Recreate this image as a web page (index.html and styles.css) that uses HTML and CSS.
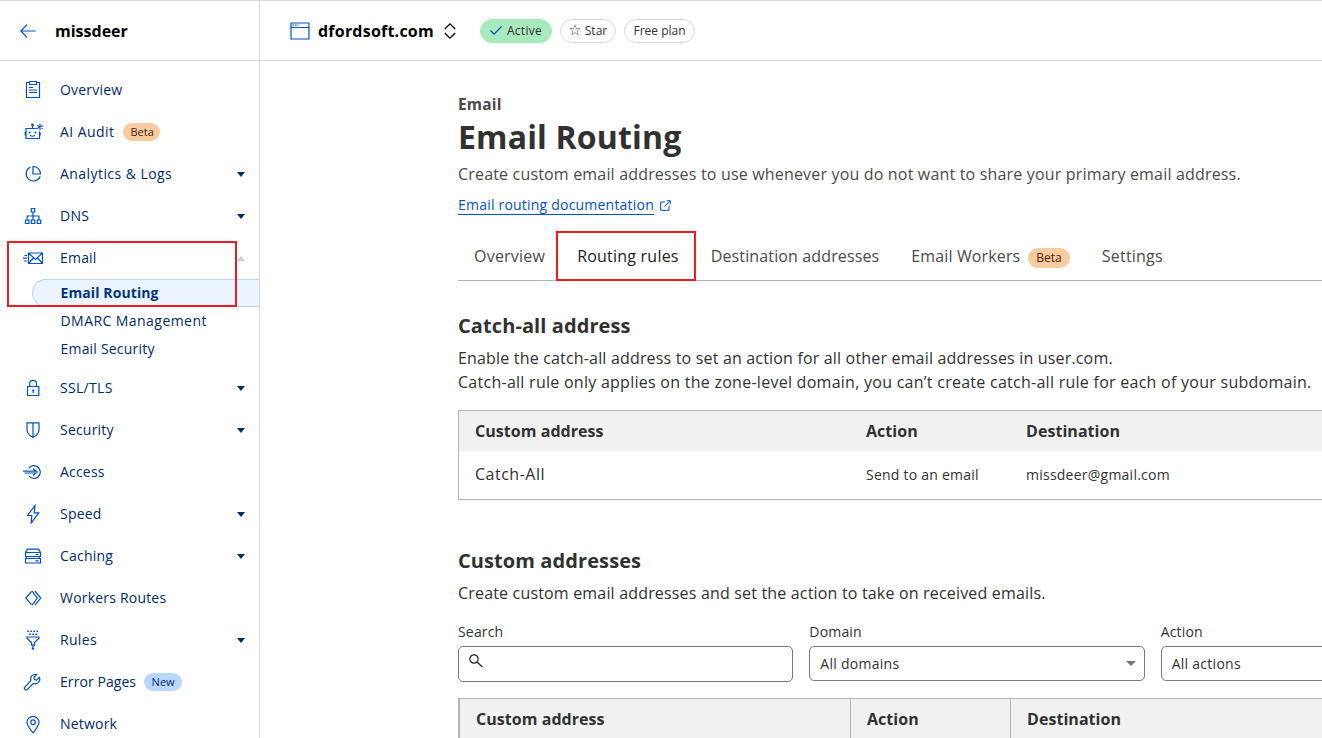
FILE: index.html
```html
<!DOCTYPE html>
<html lang="en">
<head>
<meta charset="utf-8">
<title>Email Routing</title>
<link rel="stylesheet" href="styles.css">
</head>
<body>
<div class="app">
  <aside class="sidebar">
    <div class="account">
      <svg class="back" width="16" height="14" viewBox="0 0 16 14"><path d="M7 .7.9 7 7 13.300M1 7h14.700"/></svg>
      <span class="account-name">missdeer</span>
    </div>
    <nav class="nav">
      <a class="item"><svg class="icon" viewBox="0 0 20 20"><path d="M6.500 2.500h-3v15h13v-15h-3M6.500 1.500h7v3h-7zM6 7.500h4M6 10h8M6 12.500h8"/></svg><span>Overview</span></a>
      <a class="item"><svg class="icon" viewBox="0 0 20 20"><path d="M14 6.500H3v10h13.500V9.500M9.500 6.500V3.500M2.200 10v3.500M17.200 10.500v3M7 13.200c1.200 1.400 3.600 1.400 4.800 0M17 2v6M14.300 3.500l5.400 3M19.700 3.500l-5.400 3"/><g class="solid"><circle cx="9.500" cy="3" r="1.400"/><circle cx="6.600" cy="10.500" r="1"/><circle cx="12.400" cy="10.500" r="1"/></g></svg><span class="wide">AI Audit</span><b class="badge beta first">Beta</b></a>
      <a class="item"><svg class="icon" viewBox="0 0 20 20"><path d="M7.500 3a7.300 7.300 0 1 0 9.700 9.500M10 2.500V10h7.500A7.500 7.500 0 0 0 10 2.500z"/></svg><span class="wide">Analytics &amp; Logs</span><i class="caret"></i></a>
      <a class="item"><svg class="icon" viewBox="0 0 20 20"><path d="M8.300 2.500h3.400v3.500H8.300zM2.500 14h3.500v3.500H2.500zM8.300 14h3.500v3.500H8.300zM14.200 14h3.500v3.500h-3.500zM10 6v8M4.200 14v-4h11.700v4"/></svg><span class="mid">DNS</span><i class="caret"></i></a>
      <a class="item"><svg class="icon" viewBox="0 0 20 20"><path d="M5.500 5h14v10.500h-14zM5.500 5l7 6.500 7-6.500M5.500 15.500l5-5.500M19.500 15.500l-5-5.500M1.500 7.500H4M0 10.200h4M1 13h3"/></svg><span>Email</span><i class="caret up"></i></a>
      <div class="submenu">
        <a class="sub current"><span>Email Routing</span></a>
        <a class="sub"><span class="wide">DMARC Management</span></a>
        <a class="sub"><span>Email Security</span></a>
      </div>
      <a class="item"><svg class="icon" viewBox="0 0 20 20"><path d="M4.500 8.500h11.300v9H4.500zM6.700 8.500V5.700a3.400 3.400 0 0 1 6.800 0v2.800M10.200 12v3"/><circle class="solid" cx="10.200" cy="12.300" r="1"/></svg><span class="mid">SSL/TLS</span><i class="caret"></i></a>
      <a class="item"><svg class="icon" viewBox="0 0 20 20"><path d="M4 2.800h12v6.700c0 4-3 6.500-6 8-3-1.500-6-4-6-8zM10 3v14.500"/></svg><span>Security</span><i class="caret"></i></a>
      <a class="item"><svg class="icon" viewBox="0 0 20 20"><path d="M6 6a6.400 6.400 0 1 1 0 8.200M0 9.200h13.500M1.500 11h12M10 6.700l4 3.400-4 3.400"/></svg><span>Access</span></a>
      <a class="item"><svg class="icon" viewBox="0 0 20 20"><path d="M12 1.500 4.500 11.500h4.300L8.200 19l7.500-10.200h-4.500z"/></svg><span>Speed</span><i class="caret"></i></a>
      <a class="item"><svg class="icon" viewBox="0 0 20 20"><path d="M4.500 3.200h11l2 3.300v4h-15v-4zM2.500 6.500h15M2.500 12.500h15v4.500h-15zM3.500 10.500v2M16.500 10.500v2M12.500 8.500h3M12.500 14.800h3"/></svg><span>Caching</span><i class="caret"></i></a>
      <a class="item"><svg class="icon" viewBox="0 0 20 20"><path d="M8.500 3.500 2.800 10.100 8.500 16.700M9 3l5.300 7.100L9 17.200M12 3l5.700 7.100-5.700 7.100"/></svg><span>Workers Routes</span></a>
      <a class="item"><svg class="icon" viewBox="0 0 20 20"><path d="M4 7h12v1.200l-4.500 4.300v2.700h-3v-2.700L4 8.200zM10 15.500v2"/><circle class="solid" cx="10" cy="18.500" r="1.200"/><path class="rain" d="M4.200 1.300h12M6.200 4.300h8.500"/></svg><span class="mid">Rules</span><i class="caret"></i></a>
      <a class="item"><svg class="icon" viewBox="0 0 20 20"><path d="M13.600 2.600a4.800 4.800 0 0 0-5.800 6.300L1.900 14.800a1.700 1.700 0 0 0 2.500 2.500l6-5.800a4.800 4.800 0 0 0 6.100-6.100L13.500 8 11.300 7.600 11 5.300z"/></svg><span class="snug">Error Pages</span><b class="badge new">New</b></a>
      <a class="item"><svg class="icon" viewBox="0 0 20 20"><path d="M10 18.800C7 15 4 12 4 8.300a6 6 0 0 1 12 0C16 12 13 15 10 18.800z"/><circle cx="10" cy="8.200" r="2.300"/></svg><span>Network</span></a>
    </nav>
    <div class="mark mark-nav"></div>
  </aside>
  <div class="page">
    <header class="topbar">
      <svg class="site" width="20" height="18" viewBox="0 0 20 18"><path d="M1 1h18v16H1zM1 5.500h18"/><path class="dots" d="M2.500 3.200h6"/></svg>
      <span class="domain">dfordsoft.com</span>
      <svg class="updown" width="12" height="16" viewBox="0 0 12 16"><path d="M.8 6 6 .9 11.200 6M.8 10 6 15.100 11.200 10"/></svg>
      <span class="chip active"><svg width="12" height="9" viewBox="0 0 12 9"><path d="M.5 4.500 4 8.200 11.500.5"/></svg><span>Active</span></span>
      <span class="chip star"><svg width="12" height="12" viewBox="0 0 12 12"><path d="M6 .8 7.300 4.500h3.900L8.100 6.900l1.100 4L6 8.600 2.800 10.900l1.100-4L.8 4.500h3.900z"/></svg><span>Star</span></span>
      <span class="chip plan"><span>Free plan</span></span>
    </header>
    <main class="content">
      <div class="crumb">Email</div>
      <h1>Email Routing</h1>
      <p class="lead">Create custom email addresses to use whenever you do not want to share your primary email address.</p>
      <a class="doc"><span>Email routing documentation</span><svg width="11" height="11" viewBox="0 0 11 11"><path d="M5 2H.7v8.300H9V6M6.500.7h3.800v3.800M10 1 4.500 6.500"/></svg></a>
      <div class="tabs">
        <a class="tab">Overview</a>
        <a class="tab selected">Routing rules<i class="mark"></i></a>
        <a class="tab tight">Destination addresses</a>
        <a class="tab tight">Email Workers<b class="badge beta large">Beta</b></a>
        <a class="tab">Settings</a>
      </div>
      <section class="catch-all">
        <h2>Catch-all address</h2>
        <p class="text">Enable the catch-all address to set an action for all other email addresses in user.com.</p>
        <p class="text note">Catch-all rule only applies on the zone-level domain, you can’t create catch-all rule for each of your subdomain.</p>
        <div class="table">
          <div class="row head"><span>Custom address</span><span>Action</span><span>Destination</span></div>
          <div class="row"><span class="big">Catch-All</span><span>Send to an email</span><span>missdeer@gmail.com</span></div>
        </div>
      </section>
      <section class="custom">
        <h2>Custom addresses</h2>
        <p class="text">Create custom email addresses and set the action to take on received emails.</p>
        <div class="filters">
          <div class="field"><label>Search</label><div class="box search"><svg width="14" height="14" viewBox="0 0 14 14"><circle cx="5" cy="5" r="4.200"/><path d="M8 8l5.500 5"/></svg></div></div>
          <div class="field"><label>Domain</label><div class="box"><span>All domains</span><i class="arrow"></i></div></div>
          <div class="field"><label>Action</label><div class="box"><span>All actions</span><i class="arrow"></i></div></div>
        </div>
        <div class="table ruled">
          <div class="row head"><span>Custom address</span><span>Action</span><span>Destination</span></div>
        </div>
      </section>
    </main>
  </div>
</div>
</body>
</html>
```

FILE: styles.css
```css
* { box-sizing: border-box; }
body { margin: 0; background: #fff; color: #313131; font-family: "Open Sans", "Noto Sans", sans-serif; font-size: 14px; }
h1, h2, p { margin: 0; }
svg { fill: none; stroke: #0051c3; stroke-width: 1.200; flex: none; }
.app { display: flex; width: 1322px; height: 738px; overflow: hidden; border-top: 1px solid #d9d9d9; }

/* Sidebar */
.sidebar { position: relative; width: 260px; flex: none; border-right: 1px solid #d9d9d9; }
.account { display: flex; align-items: center; height: 60px; padding-left: 20px; gap: 19px; border-bottom: 1px solid #d9d9d9; color: #000; font-size: 16px; font-weight: 700; }
.nav { padding-top: 8px; color: #002b6b; letter-spacing: .2px; }
.item { display: flex; align-items: center; height: 42px; padding: 0 14px 0 23px; }
.item > span { margin-left: 17px; padding-bottom: 2px; }
.nav .wide { letter-spacing: .44px; }
.nav .mid { letter-spacing: .32px; }
.nav .snug { letter-spacing: .07px; }
.icon { width: 20px; height: 20px; }
.solid { fill: #0051c3; stroke: none; }
.dots { stroke-dasharray: 1.500 1; }
.rain { stroke-dasharray: 1.600 1.500; stroke-width: 1.600; }
.caret { margin-left: auto; border: 4px solid transparent; border-top: 5px solid #002b6b; border-bottom: 0; }
.caret.up { border-top: 0; border-bottom: 5px solid #c5cfe0; }
.badge { height: 18px; margin-left: 8px; padding: 0 7px; border-radius: 9px; font-size: 11px; font-weight: 400; line-height: 18px; letter-spacing: 0; }
.first { margin-left: 9px; padding-right: 6.5px; }
.beta { background: #f9cba3; color: #4a1d00; }
.new { padding: 0 7.5px; background: #b9d6ff; color: #002b6b; }
.submenu { padding-bottom: 4px; }
.sub { display: flex; align-items: center; height: 28px; padding: 0 0 2px 60.500px; }
.sub.current { margin-left: 32px; padding-left: 27.500px; padding-bottom: 1px; border: 1px solid #b9d6ff; border-right: 0; border-radius: 14px 0 0 14px; background: #ebf4ff; color: #003681; font-weight: 700; letter-spacing: .1px; }

/* Highlight frames */
.mark { position: absolute; border: 2px solid #ed1c24; }
.mark-nav { left: 7px; top: 240px; width: 230px; height: 66px; }

/* Top bar */
.page { flex: 1; min-width: 0; overflow: hidden; }
.topbar { display: flex; align-items: center; height: 60px; padding-left: 30px; border-bottom: 1px solid #d9d9d9; }
.domain { width: 134px; padding-left: 8px; color: #000; font-size: 16px; font-weight: 700; letter-spacing: .22px; }
.updown { stroke: #000; stroke-width: 1.300; }
.chip { display: flex; align-items: center; justify-content: center; height: 24px; margin-left: 8px; padding-bottom: 1px; border: 1px solid #d9d9d9; border-radius: 12px; font-size: 12px; gap: 5px; }
.active { width: 72px; margin-left: 24px; border-color: #a9e9be; background: #a9e9be; letter-spacing: .3px; }
.star { width: 56px; gap: 4px; }
.star svg { stroke: #999; stroke-width: 1; }
.plan { width: 71px; }

/* Page content */
.content { width: 1236px; padding: 32px 0 0 198px; letter-spacing: .175px; }
.crumb { height: 22px; line-height: 23px; font-size: 15.500px; font-weight: 700; color: #4a4a4a; }
h1 { height: 44px; line-height: 44px; font-size: 32px; letter-spacing: .17px; }
.lead { height: 30px; line-height: 30px; font-size: 16px; color: #4a4a4a; }
.doc { display: flex; align-items: center; gap: 6px; height: 22px; margin-top: 5px; color: #0051c3; letter-spacing: .21px; }
.doc span { height: 20px; line-height: 20px; border-bottom: 1px solid #0051c3; }
.doc svg { stroke-width: 1; }
.tabs { display: flex; height: 49px; margin-top: 16px; border-bottom: 1px solid #b3b3b3; font-size: 16px; color: #4a4a4a; letter-spacing: .22px; }
.tab { display: flex; align-items: center; position: relative; padding: 0 16px; }
.tight { letter-spacing: .13px; }
.selected { color: #222; }
.tab .mark { left: -5.400px; top: -1px; width: 140px; height: 50px; }
.large { height: 20px; margin-top: 4px; line-height: 20px; border-radius: 10px; padding: 0 8px; font-size: 12px; }
h2 { height: 30px; margin-bottom: 5px; line-height: 30px; font-size: 20px; letter-spacing: .09px; }
.catch-all { padding-top: 30px; }
.text { height: 24px; line-height: 24px; font-size: 16px; }
.note { letter-spacing: .265px; }

/* Tables */
.table { margin-top: 16px; border: 1px solid #b3b3b3; }
.row { display: grid; grid-template-columns: 391px 160px 1fr; align-items: center; height: 48px; padding-bottom: 1px; letter-spacing: .24px; }
.row span { padding-left: 16px; }
.head { height: 40px; padding: 0; background: #f1f1f1; font-size: 16px; font-weight: 700; letter-spacing: .05px; }
.row .big { padding-bottom: 2px; font-size: 16px; letter-spacing: .5px; }
.ruled { border-left-width: 2px; }
.ruled span { height: 100%; border-right: 1px solid #b3b3b3; line-height: 40px; }

/* Filters */
.custom { padding-top: 46px; }
.filters { display: grid; grid-template-columns: repeat(3, 1fr); gap: 16px; margin-top: 16px; }
.field label { display: block; height: 25px; line-height: 22px; }
.box { display: flex; align-items: center; justify-content: space-between; height: 35px; padding: 0 8px 1px 10px; border: 1px solid #797979; border-radius: 5px; letter-spacing: .27px; }
.search { height: 36px; padding-bottom: 6px; }
.search svg { stroke: #222; }
.arrow { border: 5px solid transparent; border-top-color: #797979; border-bottom: 0; }
```
